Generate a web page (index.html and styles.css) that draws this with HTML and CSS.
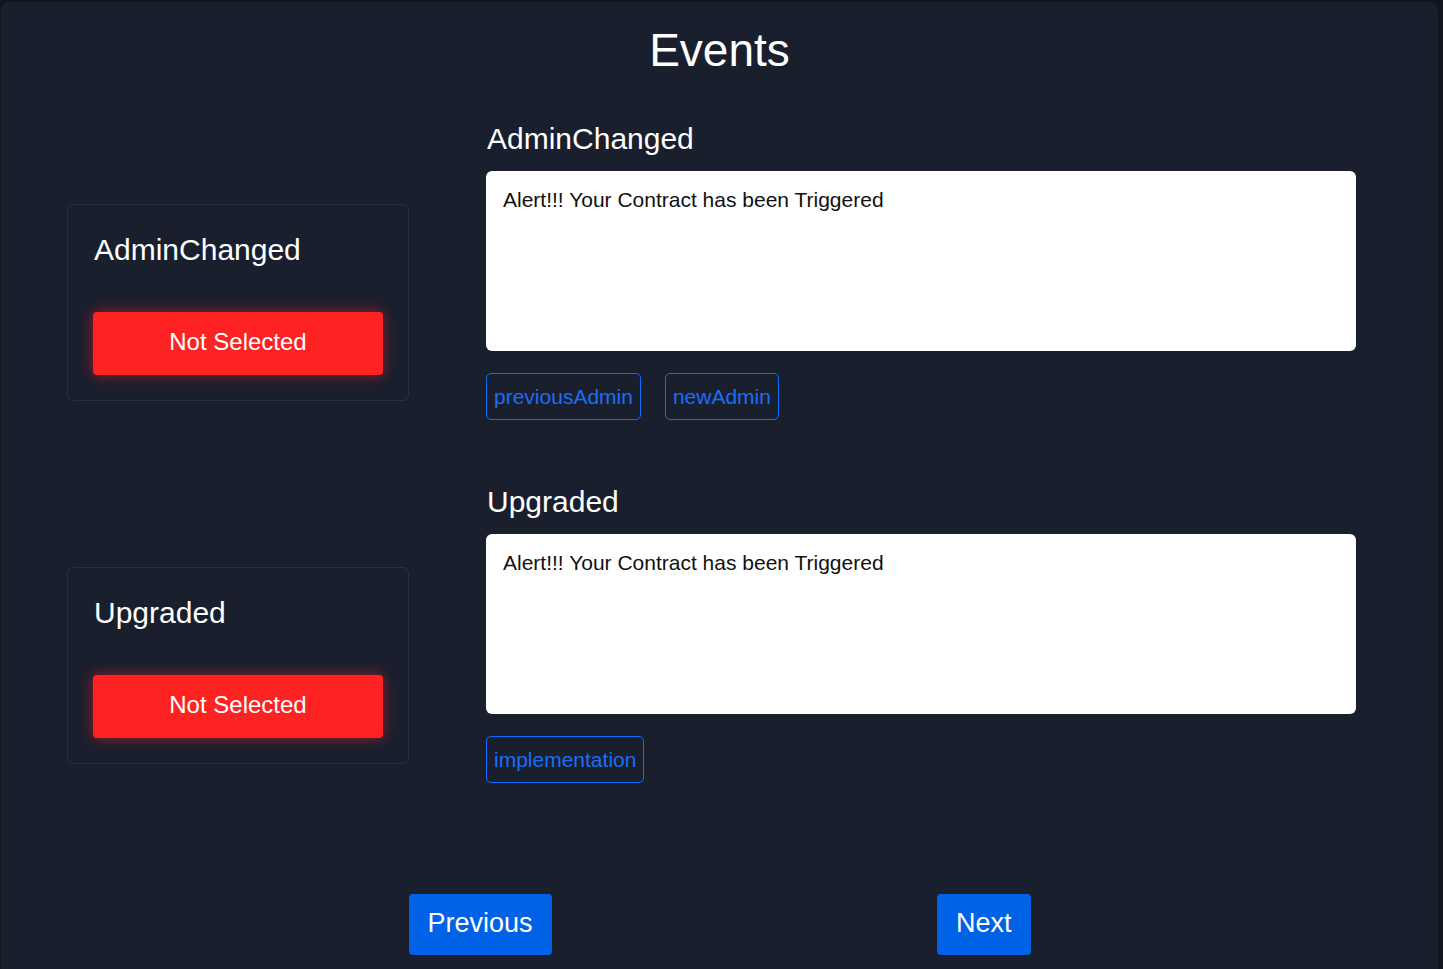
FILE: index.html
```html
<!DOCTYPE html>
<html>
<head>
<meta charset="utf-8">
<link rel="stylesheet" href="styles.css">
</head>
<body>
<div class="page">
  <h1 class="title">Events</h1>
  <div class="rows">
    <div class="row">
      <div class="card">
        <h2 class="card-title">AdminChanged</h2>
        <button class="btn-select">Not Selected</button>
      </div>
      <div class="section">
        <h2 class="section-title">AdminChanged</h2>
        <div class="message">Alert!!! Your Contract has been Triggered</div>
        <div class="tags">
          <span class="tag">previousAdmin</span>
          <span class="tag">newAdmin</span>
        </div>
      </div>
    </div>
    <div class="row">
      <div class="card">
        <h2 class="card-title">Upgraded</h2>
        <button class="btn-select">Not Selected</button>
      </div>
      <div class="section">
        <h2 class="section-title">Upgraded</h2>
        <div class="message">Alert!!! Your Contract has been Triggered</div>
        <div class="tags">
          <span class="tag">implementation</span>
        </div>
      </div>
    </div>
  </div>
  <div class="nav">
    <button class="btn-nav">Previous</button>
    <button class="btn-nav">Next</button>
  </div>
</div>
</body>
</html>
```
FILE: styles.css
```css
html, body {
  margin: 0;
  padding: 0;
  background: #12151d;
  height: 100%;
  overflow: hidden;
}
body {
  font-family: "Liberation Sans", Arial, sans-serif;
  padding: 2px 5px 0 1px;
  box-sizing: border-box;
}
.page {
  background: #1a1f2e;
  border-radius: 8px;
  min-height: 1000px;
  color: #fff;
  padding-top: 22px;
}
.title {
  margin: 0;
  text-align: center;
  font-size: 46px;
  font-weight: 400;
  line-height: 52px;
}
.rows {
  margin-top: 45px;
  display: flex;
  flex-direction: column;
}
.row {
  display: grid;
  grid-template-columns: 342px 870px;
  column-gap: 77px;
  align-items: center;
  padding-left: 66px;
}
.card {
  border: 1px solid #2a2f3e;
  border-radius: 6px;
  padding: 27px 25px 25px 25px;
}
.card-title {
  margin: 0 0 0 1px;
  font-size: 30px;
  font-weight: 400;
  line-height: 36px;
}
.btn-select {
  margin-top: 44px;
  width: 100%;
  height: 63px;
  border: none;
  border-radius: 4px;
  background: #ff2222;
  color: #fff;
  font-family: inherit;
  font-size: 24px;
  padding: 0 0 4px 0;
  box-shadow: 0 0 14px rgba(255, 34, 34, 0.55);
  display: block;
}
.section {
  padding-bottom: 64px;
}
.section-title {
  margin: 0 0 0 1px;
  font-size: 30px;
  font-weight: 400;
  line-height: 36px;
}
.message {
  margin-top: 14px;
  height: 180px;
  box-sizing: border-box;
  background: #fff;
  border-radius: 6px;
  color: #111;
  font-size: 21px;
  padding: 16px 17px;
  line-height: 26px;
}
.tags {
  margin-top: 22px;
  display: flex;
  gap: 24px;
}
.tag {
  border: 1px solid #0d6efd;
  border-radius: 5px;
  color: #1a6ef5;
  font-size: 21px;
  height: 47px;
  box-sizing: border-box;
  padding: 0 7px;
  display: flex;
  align-items: center;
}
.nav {
  width: 622px;
  margin: 47px auto 0;
  display: flex;
  justify-content: space-between;
}
.btn-nav {
  height: 61px;
  border: none;
  border-radius: 4px;
  background: #0062e6;
  color: #fff;
  font-family: inherit;
  font-size: 27px;
  padding: 0 19px 2px;
}
```
